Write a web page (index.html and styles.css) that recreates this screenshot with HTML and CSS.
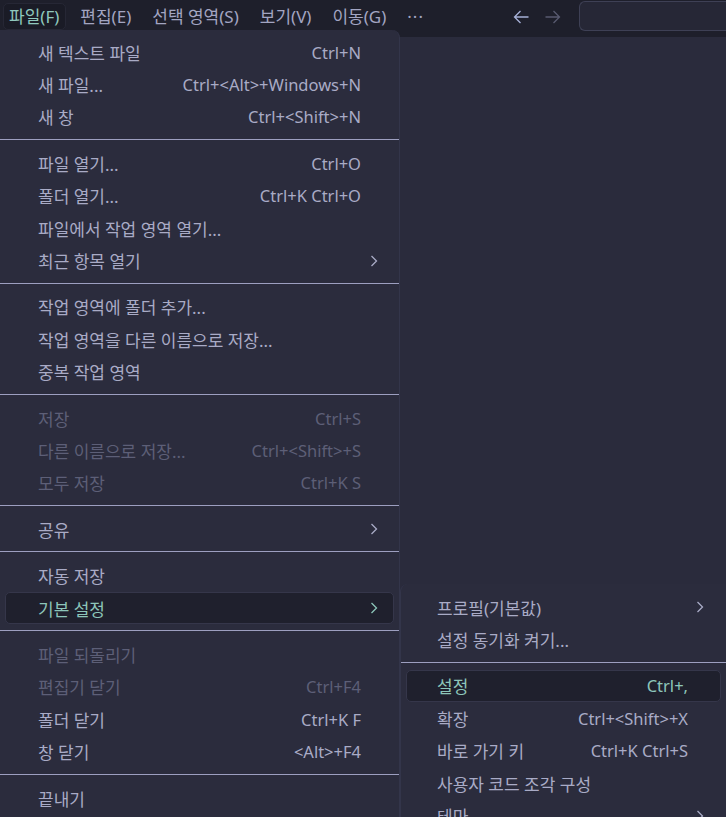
FILE: index.html
```html
<!DOCTYPE html>
<html lang="ko">
<head>
<meta charset="utf-8">
<link rel="stylesheet" href="styles.css">
</head>
<body>
<div class="titlebar">
  <nav class="menubar">
    <span class="mb-item active">파일(F)</span>
    <span class="mb-item">편집(E)</span>
    <span class="mb-item">선택 영역(S)</span>
    <span class="mb-item">보기(V)</span>
    <span class="mb-item">이동(G)</span>
    <span class="mb-item more">···</span>
  </nav>
  <div class="nav-arrows">
    <svg class="arrow back" width="16" height="14" viewBox="0 0 16 14"><path d="M15.5 7H1.5M7.5 1L1.5 7l6 6" fill="none" stroke="currentColor" stroke-width="1.3"/></svg>
    <svg class="arrow fwd" width="16" height="14" viewBox="0 0 16 14"><path d="M0.5 7h14M8.5 1l6 6-6 6" fill="none" stroke="currentColor" stroke-width="1.3"/></svg>
  </div>
  <div class="search"></div>
</div>
<div class="editor"></div>

<div class="menu main-menu">
  <div class="item"><span>새 텍스트 파일</span><span class="key">Ctrl+N</span></div>
  <div class="item"><span>새 파일...</span><span class="key">Ctrl+&lt;Alt&gt;+Windows+N</span></div>
  <div class="item"><span>새 창</span><span class="key">Ctrl+&lt;Shift&gt;+N</span></div>
  <div class="sep"></div>
  <div class="item"><span>파일 열기...</span><span class="key">Ctrl+O</span></div>
  <div class="item"><span>폴더 열기...</span><span class="key">Ctrl+K Ctrl+O</span></div>
  <div class="item"><span>파일에서 작업 영역 열기...</span></div>
  <div class="item sub"><span>최근 항목 열기</span><svg class="chev" width="8" height="12" viewBox="0 0 8 12"><path d="M1.5 1l5 5-5 5" fill="none" stroke="currentColor" stroke-width="1.3"/></svg></div>
  <div class="sep"></div>
  <div class="item"><span>작업 영역에 폴더 추가...</span></div>
  <div class="item"><span>작업 영역을 다른 이름으로 저장...</span></div>
  <div class="item"><span>중복 작업 영역</span></div>
  <div class="sep"></div>
  <div class="item disabled"><span>저장</span><span class="key">Ctrl+S</span></div>
  <div class="item disabled"><span>다른 이름으로 저장...</span><span class="key">Ctrl+&lt;Shift&gt;+S</span></div>
  <div class="item disabled"><span>모두 저장</span><span class="key">Ctrl+K S</span></div>
  <div class="sep"></div>
  <div class="item sub"><span>공유</span><svg class="chev" width="8" height="12" viewBox="0 0 8 12"><path d="M1.5 1l5 5-5 5" fill="none" stroke="currentColor" stroke-width="1.3"/></svg></div>
  <div class="sep"></div>
  <div class="item"><span>자동 저장</span></div>
  <div class="item sub selected"><span>기본 설정</span><svg class="chev" width="8" height="12" viewBox="0 0 8 12"><path d="M1.5 1l5 5-5 5" fill="none" stroke="currentColor" stroke-width="1.3"/></svg></div>
  <div class="sep"></div>
  <div class="item disabled"><span>파일 되돌리기</span></div>
  <div class="item disabled"><span>편집기 닫기</span><span class="key">Ctrl+F4</span></div>
  <div class="item"><span>폴더 닫기</span><span class="key">Ctrl+K F</span></div>
  <div class="item"><span>창 닫기</span><span class="key">&lt;Alt&gt;+F4</span></div>
  <div class="sep"></div>
  <div class="item"><span>끝내기</span></div>
</div>

<div class="menu sub-menu">
  <div class="item sub"><span>프로필(기본값)</span><svg class="chev" width="8" height="12" viewBox="0 0 8 12"><path d="M1.5 1l5 5-5 5" fill="none" stroke="currentColor" stroke-width="1.3"/></svg></div>
  <div class="item"><span>설정 동기화 켜기...</span></div>
  <div class="sep"></div>
  <div class="item selected"><span>설정</span><span class="key">Ctrl+,</span></div>
  <div class="item"><span>확장</span><span class="key">Ctrl+&lt;Shift&gt;+X</span></div>
  <div class="item"><span>바로 가기 키</span><span class="key">Ctrl+K Ctrl+S</span></div>
  <div class="item"><span>사용자 코드 조각 구성</span></div>
  <div class="item sub"><span>테마</span><svg class="chev" width="8" height="12" viewBox="0 0 8 12"><path d="M1.5 1l5 5-5 5" fill="none" stroke="currentColor" stroke-width="1.3"/></svg></div>
</div>
</body>
</html>
```
FILE: styles.css
```css
html, body {
  margin: 0;
  height: 100%;
  overflow: hidden;
}
body {
  background: #2a2b3c;
  font-family: "Noto Sans", "Noto Sans CJK KR", sans-serif;
  font-size: 17px;
  color: #a9abc6;
  position: relative;
}
.titlebar {
  height: 37px;
  background: #1e1f2b;
  display: flex;
  align-items: center;
}
.menubar {
  display: flex;
  align-items: center;
  padding-left: 3px;
  gap: 8px;
  width: 513px;
  flex: none;
  box-sizing: border-box;
  margin-top: -4px;
}
.mb-item {
  padding: 0 6px 0 5px;
  height: 25px;
  line-height: 25px;
  border-radius: 5px;
  color: #a3a5c2;
  font-size: 17px;
  border: 1px solid transparent;
}
.mb-item.active {
  color: #8fc8bd;
  background: #1a1b26;
  border-color: #262735;
}
.mb-item.more {
  letter-spacing: 1px;
}
.nav-arrows {
  display: flex;
  align-items: center;
  gap: 16px;
  margin-top: -4px;
}
.arrow { display: block; }
.arrow.back { color: #a7b1d8; }
.arrow.fwd { color: #585a70; }
.search {
  margin-left: 18px;
  align-self: flex-start;
  margin-top: 1px;
  flex: 1;
  height: 28px;
  border: 1px solid #3e4055;
  border-right: none;
  border-radius: 6px 0 0 6px;
  background: #262736;
}
.menu {
  position: absolute;
  background: #2b2c3d;
  box-sizing: border-box;
}
.main-menu {
  left: 0;
  top: 30px;
  width: 400px;
  padding: 6px 5px 10px;
  border-radius: 0 8px 0 0;
  border-right: 1px solid #33354a;
}
.sub-menu {
  left: 400px;
  top: 584px;
  width: 326px;
  padding: 7px 5px 10px;
  border-radius: 8px 0 0 0;
  border-left: 1px solid #33354a;
}
.item {
  height: 32.4px;
  display: flex;
  align-items: center;
  justify-content: space-between;
  padding: 0 32px;
  border-radius: 5px;
  border: 1px solid transparent;
  box-sizing: border-box;
  white-space: nowrap;
}
.key { font-size: 16.5px; }
.sub-menu .item { padding: 0 32px 0 30px; }
.item.sub { padding-right: 15px; }
.sub-menu .item.sub { padding-right: 16px; }
.item.disabled { color: #5d5f77; }
.item.selected {
  background: #1f202d;
  border-color: #35364a;
  color: #8dc6ba;
}
.chev { display: block; }
.sep {
  height: 1px;
  background: #9d9fc0;
  margin: 6px -5px 7px;
}
.sub-menu .sep { margin: 6px -5px 7px; }
```
